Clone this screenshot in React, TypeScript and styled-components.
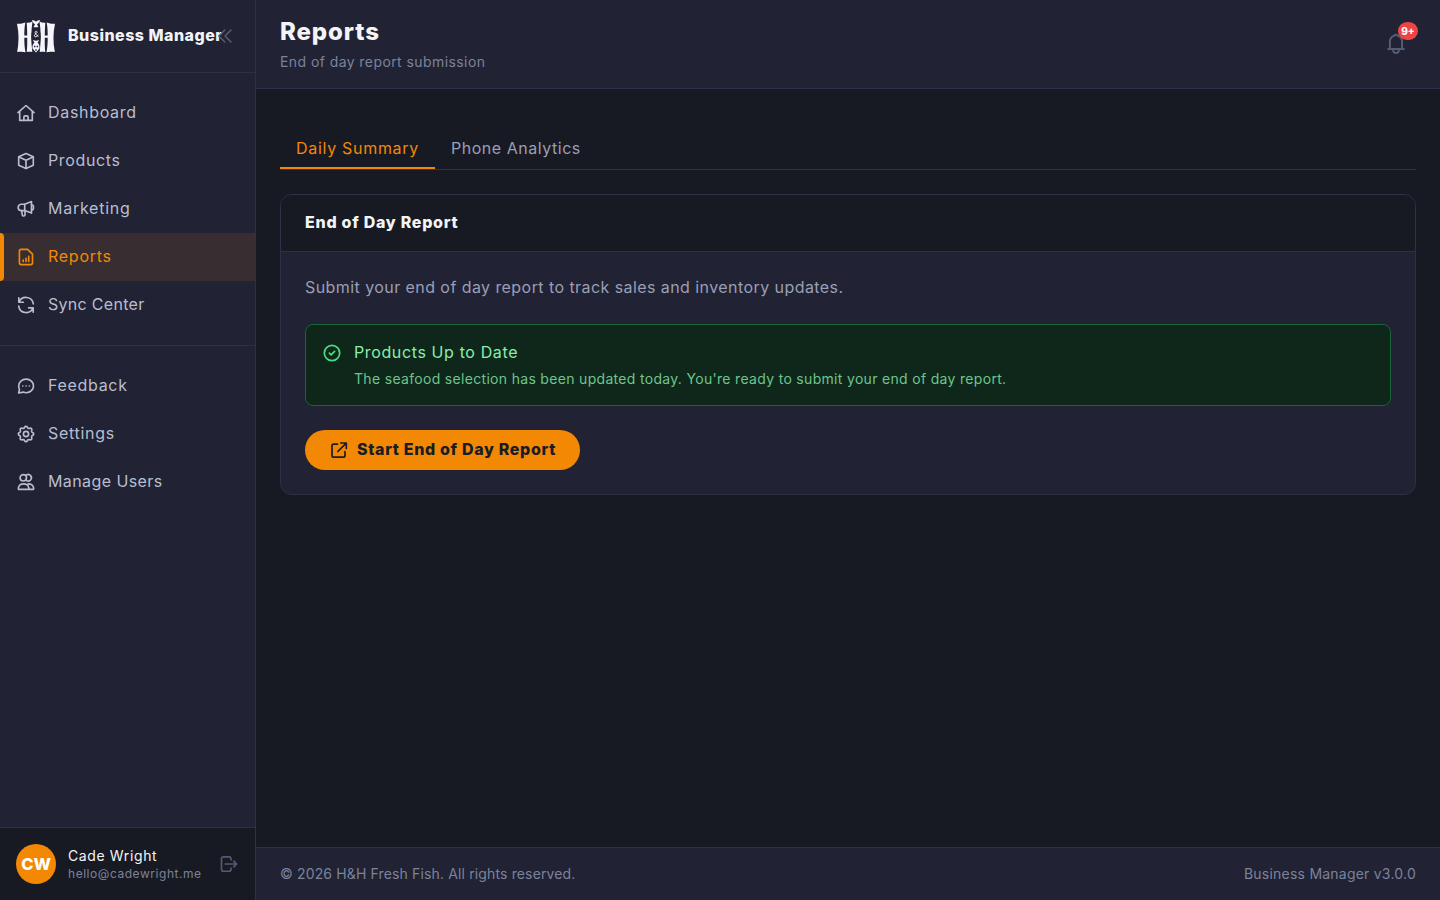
import React from 'react';
import styled, { createGlobalStyle } from 'styled-components';

const color = {
  page: '#181a23',
  panel: '#212233',
  line: '#2e3047',
  accent: '#f38805',
  text: '#f3f4f8',
  nav: '#b8bed0',
  body: '#9a9fb6',
  muted: '#7b829b',
  faint: '#565b75',
};

const GlobalStyle = createGlobalStyle`
  *, *::before, *::after { box-sizing: border-box; }
  body {
    margin: 0;
    background: ${color.page};
    color: ${color.text};
    font-family: Inter, "Liberation Sans", sans-serif;
    -webkit-font-smoothing: antialiased;
  }
  h1, h2, p { margin: 0; }
  button { font: inherit; border: 0; background: none; padding: 0; color: inherit; }
  svg { display: block; flex: none; }
`;

const Shell = styled.div`
  display: flex;
  height: 100vh;
  overflow: hidden;
`;

const Sidebar = styled.aside`
  display: flex;
  flex-direction: column;
  flex: none;
  width: 256px;
  background: ${color.panel};
  border-right: 1px solid ${color.line};
`;

const Brand = styled.div`
  display: flex;
  align-items: center;
  gap: 12px;
  height: 73px;
  padding: 0 16px;
  border-bottom: 1px solid ${color.line};
`;

const BrandName = styled.span`
  width: 144px;
  padding-bottom: 2px;
  font-size: 16px;
  font-weight: 800;
  line-height: 22px;
  letter-spacing: 0.48px;
  white-space: nowrap;
`;

const CollapseButton = styled.button`
  display: flex;
  margin-left: -9px;
  color: ${color.faint};
`;

const NavGroup = styled.nav<{ $divided?: boolean }>`
  display: flex;
  flex-direction: column;
  padding: 16px 0;
  border-top: ${(p) => (p.$divided ? `1px solid ${color.line}` : 'none')};
`;

const NavItem = styled.a<{ $active?: boolean }>`
  position: relative;
  display: flex;
  align-items: center;
  gap: 12px;
  height: 48px;
  padding: 0 16px;
  color: ${(p) => (p.$active ? color.accent : color.nav)};
  background: ${(p) => (p.$active ? '#382e31' : 'transparent')};

  &::before {
    content: '';
    display: ${(p) => (p.$active ? 'block' : 'none')};
    position: absolute;
    inset: 0 auto 0 0;
    width: 4px;
    border-radius: 0 4px 4px 0;
    background: ${color.accent};
  }
`;

const NavLabel = styled.span<{ $track: number }>`
  padding-bottom: 2px;
  font-size: 16px;
  line-height: 22px;
  letter-spacing: ${(p) => p.$track}px;
`;

const Account = styled.div`
  display: flex;
  align-items: center;
  gap: 12px;
  height: 73px;
  margin-top: auto;
  padding: 0 16px;
  background: ${color.page};
  border-top: 1px solid ${color.line};
`;

const Avatar = styled.div`
  display: flex;
  align-items: center;
  justify-content: center;
  width: 40px;
  height: 40px;
  border-radius: 50%;
  background: ${color.accent};
  color: #fff;
  font-size: 16.5px;
  font-weight: 800;
`;

const Person = styled.div`
  width: 139px;
  white-space: nowrap;
`;

const PersonName = styled.div`
  font-size: 14px;
  line-height: 18px;
  letter-spacing: 0.62px;
`;

const PersonMail = styled.div`
  font-size: 12px;
  line-height: 17px;
  letter-spacing: 0.54px;
  color: ${color.muted};
`;

const SignOut = styled.button`
  display: flex;
  color: ${color.faint};
`;

const Main = styled.div`
  display: flex;
  flex: 1;
  flex-direction: column;
  min-width: 0;
`;

const TopBar = styled.header`
  display: flex;
  align-items: center;
  justify-content: space-between;
  height: 89px;
  padding: 0 32px 0 24px;
  background: ${color.panel};
  border-bottom: 1px solid ${color.line};
`;

const PageTitle = styled.h1`
  font-size: 24px;
  font-weight: 800;
  line-height: 32px;
  letter-spacing: 0.9px;
`;

const PageSubtitle = styled.p`
  margin-top: 4px;
  font-size: 14px;
  line-height: 20px;
  letter-spacing: 0.42px;
  color: ${color.muted};
`;

const BellButton = styled.button`
  position: relative;
  display: flex;
  color: ${color.faint};
`;

const Badge = styled.span`
  position: absolute;
  top: -10px;
  right: -10px;
  display: flex;
  align-items: center;
  justify-content: center;
  width: 20px;
  height: 18px;
  border-radius: 9px;
  background: #ef4444;
  color: #fff;
  font-size: 10px;
  font-weight: 800;
`;

const Content = styled.main`
  flex: 1;
  padding: 24px;
`;

const Tabs = styled.div`
  display: flex;
  align-items: flex-end;
  height: 57px;
  margin-bottom: 24px;
  border-bottom: 1px solid ${color.line};
`;

const Tab = styled.button<{ $active?: boolean; $track: number }>`
  padding: 8px 16px 7px;
  border-bottom: 2px solid ${(p) => (p.$active ? color.accent : 'transparent')};
  color: ${(p) => (p.$active ? color.accent : color.body)};
  font-size: 16px;
  line-height: 24px;
  letter-spacing: ${(p) => p.$track}px;
`;

const Card = styled.section`
  overflow: hidden;
  border: 1px solid ${color.line};
  border-radius: 12px;
  background: ${color.panel};
`;

const CardHeader = styled.div`
  display: flex;
  align-items: center;
  height: 57px;
  padding: 0 24px;
  background: ${color.page};
  border-bottom: 1px solid ${color.line};
`;

const CardTitle = styled.h2`
  padding-bottom: 2px;
  font-size: 16px;
  font-weight: 800;
  line-height: 22px;
  letter-spacing: 0.73px;
`;

const CardBody = styled.div`
  display: flex;
  flex-direction: column;
  align-items: flex-start;
  gap: 24px;
  padding: 24px;
`;

const Lead = styled.p`
  padding-bottom: 2px;
  font-size: 16px;
  line-height: 22px;
  letter-spacing: 0.43px;
  color: ${color.body};
`;

const Notice = styled.div`
  display: flex;
  gap: 12px;
  width: 100%;
  padding: 16px;
  border: 1px solid #176534;
  border-radius: 8px;
  background: #0f271a;
  color: #4ade80;

  svg { margin-top: 2px; }
`;

const NoticeTitle = styled.p`
  padding-bottom: 2px;
  font-size: 16px;
  line-height: 22px;
  letter-spacing: 0.62px;
  color: #86efac;
`;

const NoticeText = styled.p`
  margin-top: 4px;
  font-size: 14px;
  line-height: 20px;
  letter-spacing: 0.315px;
  color: #6ec48e;
`;

const PrimaryButton = styled.button`
  display: flex;
  align-items: center;
  gap: 8px;
  width: 275px;
  height: 40px;
  padding: 0 24px;
  border-radius: 20px;
  background: ${color.accent};
  color: #1a1c26;
  font-size: 16px;
  font-weight: 800;
  letter-spacing: 0.66px;
  white-space: nowrap;
`;

const ButtonLabel = styled.span`
  padding-bottom: 2px;
  line-height: 22px;
`;

const Footer = styled.footer`
  display: flex;
  align-items: center;
  justify-content: space-between;
  height: 53px;
  padding: 0 24px;
  background: ${color.panel};
  border-top: 1px solid ${color.line};
  color: ${color.muted};
  font-size: 14px;
  line-height: 20px;
`;

const FooterText = styled.span<{ $track: number }>`
  letter-spacing: ${(p) => p.$track}px;
`;

const Stroke = ({ size = 20, width = 1.65, children }: { size?: number; width?: number; children: React.ReactNode }) => (
  <svg
    width={size}
    height={size}
    viewBox={`0 0 ${size} ${size}`}
    fill="none"
    stroke="currentColor"
    strokeWidth={width}
    strokeLinecap="round"
    strokeLinejoin="round"
  >
    {children}
  </svg>
);

const HomeIcon = () => (
  <Stroke>
    <path d="M2 9.6 10 2.5l8 7.1M3.7 8.3v9.1h12.6V8.3" />
    <path d="M7.9 17.2v-3.1c0-.7.5-1.2 1.2-1.2h1.8c.7 0 1.2.5 1.2 1.2v3.1" />
  </Stroke>
);

const BoxIcon = () => (
  <Stroke>
    <path d="M10 2.4 17.3 5.7v8.6L10 17.6 2.7 14.3V5.7L10 2.4Z" />
    <path d="M2.9 5.9 10 9.2l7.1-3.3M10 9.2v8.2" />
  </Stroke>
);

const MegaphoneIcon = () => (
  <Stroke>
    <path d="M8.7 5.2H5.4a3 3 0 0 0 0 6.4h3.3l6.8 2.5V2.6L8.7 5.2Z" />
    <path d="M8.7 5.2v6.4M15.5 6h.5c2 0 2 4.8 0 4.8h-.5M5.6 11.7l.8 4.6c.2 1 2.6 1 2.6-.2v-4" />
  </Stroke>
);

const ReportIcon = () => (
  <Stroke>
    <path d="M5.3 2.3h6.3l4.9 4.9v8.5c0 1.1-.8 1.9-1.9 1.9H5.3c-1.1 0-1.9-.8-1.9-1.9V4.2c0-1.1.8-1.9 1.9-1.9Z" />
    <path d="M7.2 13v1.5M10 11.3v3.2M12.7 9.4v5.1" />
  </Stroke>
);

const SyncIcon = () => (
  <Stroke>
    <path d="M2.8 2.8v4.4h4.6M3.1 7a7.4 7.4 0 0 1 14.2 1.9M17.2 17.2v-4.4h-4.6M16.9 13A7.4 7.4 0 0 1 2.7 11.1" />
  </Stroke>
);

const FeedbackIcon = () => (
  <Stroke>
    <path d="M10.2 3.1c4.2 0 7.3 3 7.3 6.8s-3.1 6.8-7.3 6.8c-1 0-2-.2-2.9-.6L2.6 17l.9-3.5c-.5-1-.8-2.2-.8-3.5 0-3.9 3.2-6.9 7.5-6.9Z" />
    <path d="M6.8 10h.01M10.1 10h.01M13.4 10h.01" />
  </Stroke>
);

const gearOutline =
  Array.from({ length: 96 }, (_, i) => {
    const a = (i / 96) * Math.PI * 2;
    const r = 6.9 + 0.75 * Math.tanh(1.8 * Math.cos(8 * a));
    return `${i ? 'L' : 'M'}${(10 + r * Math.cos(a)).toFixed(2)} ${(10 + r * Math.sin(a)).toFixed(2)}`;
  }).join('') + 'Z';

const SettingsIcon = () => (
  <Stroke>
    <path d={gearOutline} />
    <circle cx="10" cy="10" r="2.6" />
  </Stroke>
);

const UsersIcon = () => (
  <Stroke>
    <circle cx="7.3" cy="5.8" r="3.2" />
    <path d="M10.3 3.2a3.2 3.2 0 1 1 0 5.2" />
    <path d="M2.4 17.3v-1.4c.5-2.6 2.2-4 5.2-4s4.7 1.4 5.2 4v1.4H2.4ZM12.2 11.9c3 0 4.9 1.4 5.4 4v1.4h-4.4" />
  </Stroke>
);

const CollapseIcon = () => (
  <Stroke width={1.6}>
    <path d="m9.8 4-6 6 6 6M16 4l-6 6 6 6" />
  </Stroke>
);

const SignOutIcon = () => (
  <Stroke>
    <path d="M12 6V4.8C12 3.5 11.2 2.8 10 2.8H4.5c-1.3 0-2 .7-2 2v10.4c0 1.3.7 2 2 2H10c1.200 0 2-.7 2-2V14" />
    <path d="M6.2 10h11.3M14.8 7.2l2.8 2.8-2.8 2.8" />
  </Stroke>
);

const BellIcon = () => (
  <Stroke size={24} width={2}>
    <path d="M4.2 17h15.6M5.9 16.8V9.6a6.100 6.100 0 0 1 4-5.700c.4-1.500 3.800-1.500 4.200 0a6.100 6.100 0 0 1 4 5.700v7.200M9 17.200c0 5 6 5 6 0" />
  </Stroke>
);

const CheckIcon = () => (
  <Stroke width={1.7}>
    <circle cx="10" cy="10" r="7.7" />
    <path d="m7.4 10.2 1.7 1.7 3.5-3.5" />
  </Stroke>
);

const OpenIcon = () => (
  <Stroke width={1.7}>
    <path d="M8.5 4.1H4.7C3.6 4.1 3 4.7 3 5.8v9.700c0 1.100.6 1.700 1.700 1.700h9.600c1.100 0 1.700-.6 1.700-1.700v-3.800M8.800 11.500l8.400-8.400M11.800 3h5.500v5.500" />
  </Stroke>
);

const Logo = () => (
  <svg width="40" height="40" viewBox="0 0 40 40" fill="#f5f5fb">
    <path d="M1 7.800c3 .2 5.600-.2 8.300-1.300-.8 4.500-1 8.500-1 13h2.900c0-4.500-.2-8.700-.5-12.700 2 .2 4-.3 5.800-1.300-1.500 9-1.500 20-.2 30.500-1.800-.4-3.600-.4-5.500 0 .4-4.600.5-9 .4-14.300H8.300c0 5.300.3 9.800 1.200 14.500-2.800-.8-5.500-.7-8.300-.1C3 26.500 3 17 1 7.800Z" />
    <path d="M39 7.800c-3 .2-5.600-.2-8.300-1.300.8 4.500 1 8.500 1 13h-2.900c0-4.500.2-8.700.5-12.700-2 .2-4-.3-5.800-1.300 1.500 9 1.500 20 .2 30.500 1.800-.4 3.600-.4 5.500 0-.4-4.600-.5-9-.4-14.300h2.900c0 5.300-.3 9.800-1.200 14.500 2.800-.8 5.500-.7 8.300-.1-1.800-9.600-1.800-19.100.2-28.300Z" />
    <path d="M20 7.500c-3 3.500-4.600 8-4.600 13.500 0 6 1.500 11 4.600 15.500 3.100-4.500 4.600-9.500 4.600-15.500 0-5.500-1.600-10-4.600-13.500Z" fill="#212233" />
    <path d="M16 4c1.500.2 2.900.7 4 1.800C21.100 4.700 22.500 4.200 24 4c-.4 2-1.500 3.400-3 4.200l1.500 3h-5l1.500-3c-1.500-.8-2.600-2.200-3-4.200Z" />
    <path d="M17 24c2 1 4 1 6 0-.3 1.200-.8 2-1.500 2.600 1.600 1.500 2.300 3.400 2 5.900L20 36.500l-3.500-4c-.3-2.500.4-4.400 2-5.900-.7-.6-1.200-1.400-1.500-2.600Z" />
    <path d="M22.300 20.800c-1.500-1.600-3.200-3-3.200-4.300 0-1.700 2.300-1.500 2 0-.2 1.100-2.700 1.600-2.700 3.200 0 1.600 2.700 1.700 3.700-1" fill="none" stroke="#f5f5fb" strokeWidth="1" />
    <path d="M18 29.800h1.400v1.400H18zM20.700 29.800h1.400v1.400h-1.400zM19.500 33h1v2h-1z" fill="#212233" />
  </svg>
);

const primaryNav = [
  { label: 'Dashboard', track: 0.69, icon: <HomeIcon /> },
  { label: 'Products', track: 0.65, icon: <BoxIcon /> },
  { label: 'Marketing', track: 0.74, icon: <MegaphoneIcon /> },
  { label: 'Reports', track: 0.73, icon: <ReportIcon />, active: true },
  { label: 'Sync Center', track: 0.3, icon: <SyncIcon /> },
];

const secondaryNav = [
  { label: 'Feedback', track: 0.69, icon: <FeedbackIcon /> },
  { label: 'Settings', track: 0.71, icon: <SettingsIcon /> },
  { label: 'Manage Users', track: 0.41, icon: <UsersIcon /> },
];

export default function App() {
  return (
    <>
      <GlobalStyle />
      <Shell>
        <Sidebar>
          <Brand>
            <Logo />
            <BrandName>Business Manager</BrandName>
            <CollapseButton aria-label="Collapse sidebar">
              <CollapseIcon />
            </CollapseButton>
          </Brand>
          <NavGroup>
            {primaryNav.map((item) => (
              <NavItem key={item.label} $active={item.active}>
                {item.icon}
                <NavLabel $track={item.track}>{item.label}</NavLabel>
              </NavItem>
            ))}
          </NavGroup>
          <NavGroup $divided>
            {secondaryNav.map((item) => (
              <NavItem key={item.label}>
                {item.icon}
                <NavLabel $track={item.track}>{item.label}</NavLabel>
              </NavItem>
            ))}
          </NavGroup>
          <Account>
            <Avatar>CW</Avatar>
            <Person>
              <PersonName>Cade Wright</PersonName>
              <PersonMail>hello@cadewright.me</PersonMail>
            </Person>
            <SignOut aria-label="Sign out">
              <SignOutIcon />
            </SignOut>
          </Account>
        </Sidebar>
        <Main>
          <TopBar>
            <div>
              <PageTitle>Reports</PageTitle>
              <PageSubtitle>End of day report submission</PageSubtitle>
            </div>
            <BellButton aria-label="Notifications">
              <BellIcon />
              <Badge>9+</Badge>
            </BellButton>
          </TopBar>
          <Content>
            <Tabs>
              <Tab $active $track={0.7}>Daily Summary</Tab>
              <Tab $track={0.53}>Phone Analytics</Tab>
            </Tabs>
            <Card>
              <CardHeader>
                <CardTitle>End of Day Report</CardTitle>
              </CardHeader>
              <CardBody>
                <Lead>Submit your end of day report to track sales and inventory updates.</Lead>
                <Notice>
                  <CheckIcon />
                  <div>
                    <NoticeTitle>Products Up to Date</NoticeTitle>
                    <NoticeText>
                      The seafood selection has been updated today. You're ready to submit your end of day report.
                    </NoticeText>
                  </div>
                </Notice>
                <PrimaryButton>
                  <OpenIcon />
                  <ButtonLabel>Start End of Day Report</ButtonLabel>
                </PrimaryButton>
              </CardBody>
            </Card>
          </Content>
          <Footer>
            <FooterText $track={0.14}>© 2026 H&amp;H Fresh Fish. All rights reserved.</FooterText>
            <FooterText $track={0.225}>Business Manager v3.0.0</FooterText>
          </Footer>
        </Main>
      </Shell>
    </>
  );
}
